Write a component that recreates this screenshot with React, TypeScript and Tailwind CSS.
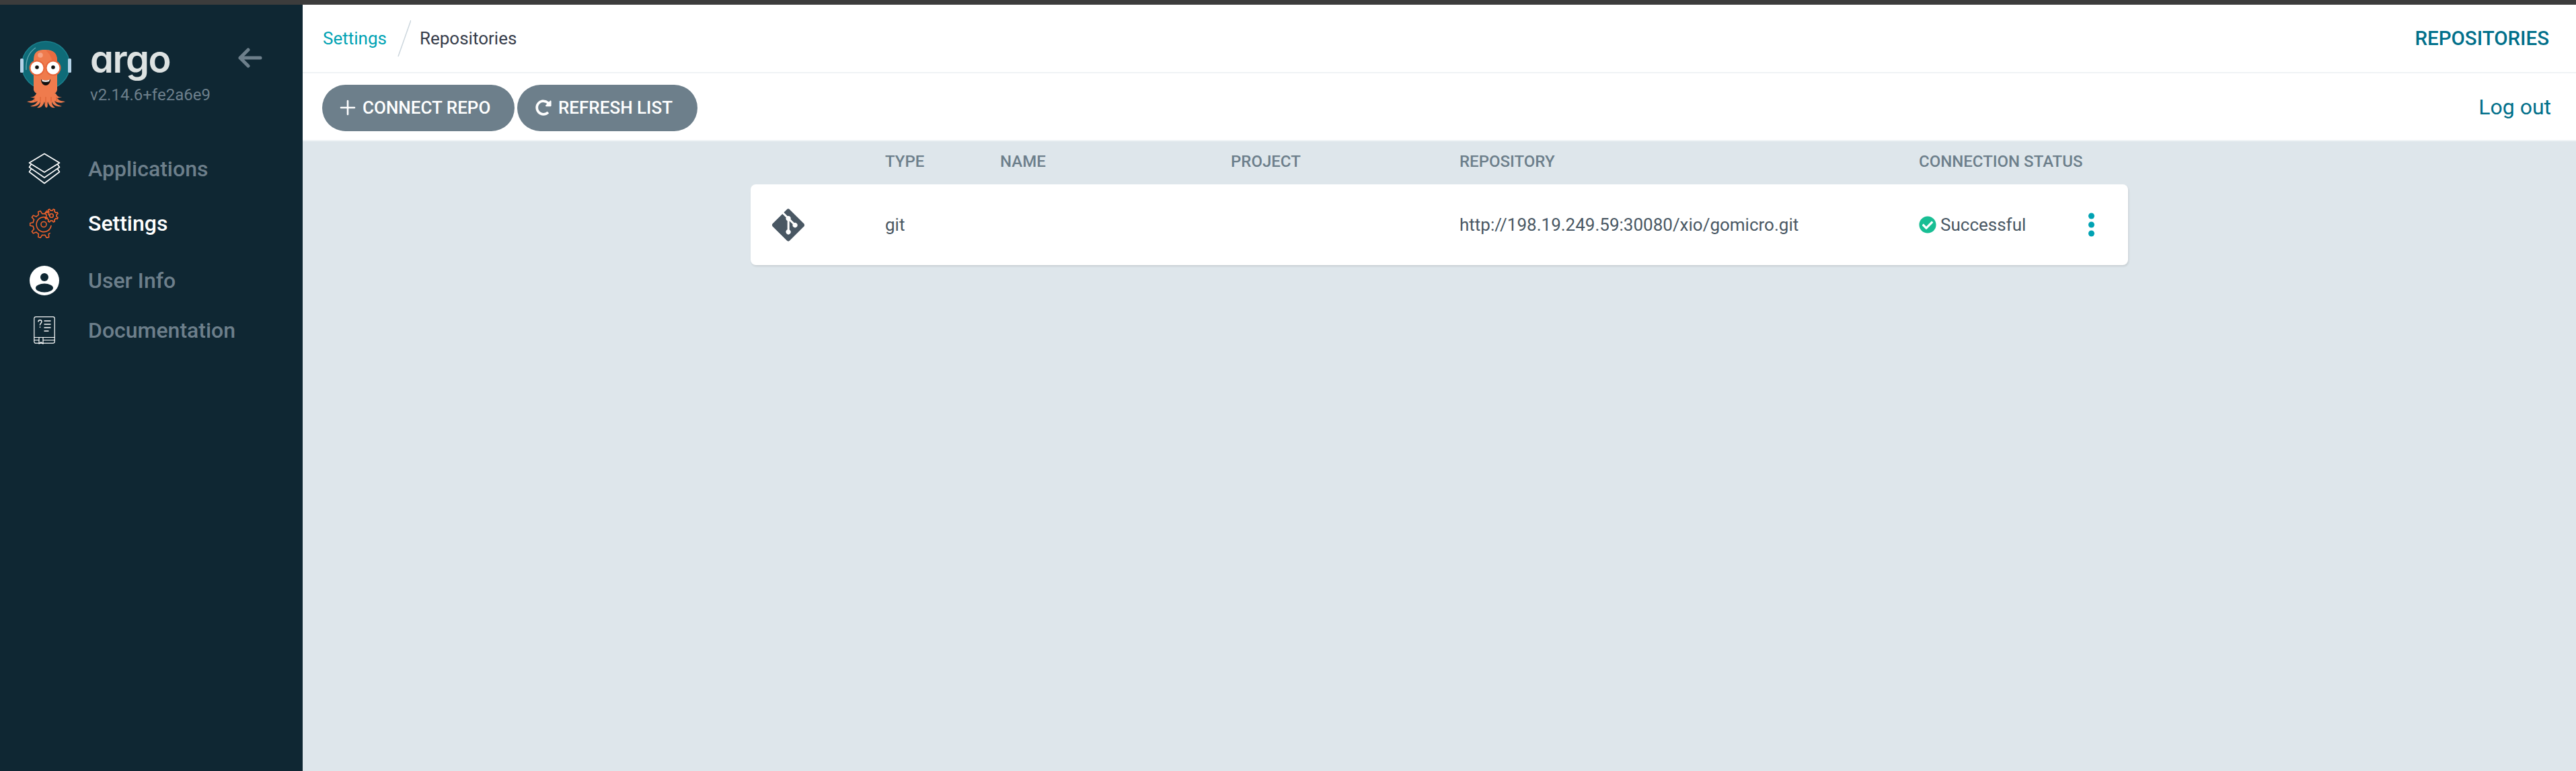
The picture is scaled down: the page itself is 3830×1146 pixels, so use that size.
import React from "react";
import { FaGitAlt, FaCheckCircle, FaRedoAlt } from "react-icons/fa";

function gearPath(cx: number, cy: number, ro: number, ri: number, teeth: number, start: number, end: number) {
  const pts: string[] = [];
  const step = (end - start) / teeth;
  for (let i = 0; i < teeth; i++) {
    const a = start + i * step;
    const p = (r: number, t: number) => {
      const x = cx + r * Math.cos((t * Math.PI) / 180);
      const y = cy + r * Math.sin((t * Math.PI) / 180);
      return `${x.toFixed(2)} ${y.toFixed(2)}`;
    };
    pts.push(`${i === 0 ? "M" : "L"}${p(ri, a)}`);
    pts.push(`L${p(ri, a + step * 0.22)}`);
    pts.push(`L${p(ro, a + step * 0.36)}`);
    pts.push(`L${p(ro, a + step * 0.64)}`);
    pts.push(`L${p(ri, a + step * 0.78)}`);
    pts.push(`L${p(ri, a + step)}`);
  }
  return pts.join(" ");
}

function ArgoLogo() {
  return (
    <svg width="80" height="102" viewBox="0 0 80 102" className="shrink-0">
      <circle cx="38" cy="37" r="35.5" fill="#0f6b78" />
      <circle cx="38" cy="37" r="35.5" fill="none" stroke="#1b7f8c" strokeWidth="1.5" />
      <path d="M9 44 C8 28 14 17 23 11" fill="none" stroke="#5fa6ae" strokeWidth="1.4" />
      <rect x="0" y="27" width="5" height="21" rx="1.5" fill="#b5d3e8" />
      <rect x="71" y="27" width="5" height="21" rx="1.5" fill="#b5d3e8" />
      <path d="M20 73 L20 30 C20 16 27 14 37 14 C47 14 55 17 55 30 L55 73 C55 76 52 80 48 80 L28 80 C24 80 20 76 20 73Z" fill="#ef7b4d" />
      <circle cx="30" cy="22" r="3.8" fill="#f6a283" />
      <path d="M38 15 C48 15 55 18 55 30 L55 45 L50 40 C47 30 47 22 38 15Z" fill="#e8653a" opacity="0.7" />
      <path d="M24 79 C21 85 18 84 15 84 L22 86 C18 91 14 90 10 91 C16 94 22 93 26 90 C24 95 20 96 15 98 C22 99 28 97 30 91 C30 96 28 98 25 100 C31 101 34 97 36 91 C37 95 36 99 39 100 C42 99 40 95 41 91 C43 97 46 101 52 100 C49 98 47 96 47 91 C49 97 55 99 62 98 C57 96 53 95 51 90 C55 93 61 94 67 91 C63 90 59 91 55 86 L62 84 C59 84 56 85 53 79Z" fill="#ef7b4d" />
      <path d="M21 84 C21 92 22 92 24 90 M30 84 L30 91 M38 84 L38 94 M46 84 L46 91 M54 84 C55 92 54 92 52 90" fill="none" stroke="#d4572b" strokeWidth="0.9" />
      <circle cx="25" cy="41" r="10.5" fill="#fff" stroke="#e8653a" strokeWidth="2" />
      <circle cx="49" cy="41" r="10.5" fill="#fff" stroke="#e8653a" strokeWidth="2" />
      <circle cx="25" cy="40" r="2.8" fill="#111" />
      <circle cx="49" cy="40" r="2.8" fill="#111" />
      <path d="M31 58 C35 60 41 60 45 58 C45 64 41 67 38 67 C35 67 31 64 31 58Z" fill="#111" />
      <path d="M32 58 C35 60 41 60 44 58 L43 61 C40 62 36 62 33 61Z" fill="#fff" />
    </svg>
  );
}

function StackIcon() {
  return (
    <svg width="48" height="48" viewBox="0 0 48 48" fill="none" stroke="#fff" strokeWidth="1.6" strokeLinejoin="round" strokeLinecap="round">
      <path d="M24 1.5 L46.5 15 L24 29 L1.5 15Z" />
      <path d="M4.5 17 L1.5 21.5 L24 37 L46.5 21.5 L43.5 17" />
      <path d="M4.5 24 L1.5 28.5 L24 45.5 L46.5 28.5 L43.5 24" />
    </svg>
  );
}

function GearIcon() {
  return (
    <svg width="44" height="44" viewBox="0 0 44 44" fill="none" stroke="#f0622c" strokeWidth="1.6" strokeLinejoin="round" strokeLinecap="round">
      <path d={gearPath(21, 23.5, 20.5, 16, 7, 55, 305)} />
      <circle cx="21" cy="23.5" r="4" />
      <path d="M26.5 14 A11 11 0 1 0 32 25.5" />
      <path d={gearPath(32.5, 10.5, 10, 7.6, 8, 0, 360) + " Z"} />
      <circle cx="32.5" cy="10.5" r="2.8" />
    </svg>
  );
}

function UserIcon() {
  return (
    <svg width="44" height="44" viewBox="0 0 44 44">
      <circle cx="22" cy="22" r="22" fill="#fff" />
      <circle cx="22" cy="17" r="6" fill="#0f2733" />
      <ellipse cx="22" cy="33" rx="13" ry="6.5" fill="#0f2733" />
    </svg>
  );
}

function DocIcon() {
  return (
    <svg width="32" height="42" viewBox="0 0 32 42" fill="none" stroke="#fff" strokeWidth="1.2" strokeLinecap="round" strokeLinejoin="round">
      <rect x="0.8" y="0.8" width="30.4" height="39.4" rx="2.5" />
      <path d="M1 31.5 H31 M1 35.5 H31" />
      <path d="M8 32 V41 L11 38.5 L14 41 V32" fill="#0f2733" />
      <path d="M7 8 C7 5 12 5 12 8 C12 10.5 9.5 10.5 9.5 13 M9.5 16 V16.5" strokeWidth="1.4" />
      <path d="M16 7 H25 M16 12 H25 M16 17 H25 M16 22 H22" strokeWidth="1.4" />
    </svg>
  );
}

function NavItem({ icon, label, active, h }: { icon: React.ReactNode; label: string; active?: boolean; h: string }) {
  return (
    <div className={`flex items-center ${h}`}>
      <div className="w-[131px] pl-[42px] shrink-0">
        <div className="flex justify-center w-[48px]">{icon}</div>
      </div>
      <span className={`text-[32px] leading-none font-medium ${active ? "text-white" : "text-[#6d7f8b]"}`}>{label}</span>
    </div>
  );
}

const cols = "grid grid-cols-[200px_171px_343px_340px_683px_1fr] items-center";

export default function App() {
  return (
    <div className="w-[3830px] h-[1146px] flex flex-col overflow-hidden font-[Roboto,sans-serif] bg-[#dee6eb]">
      <div className="h-[7px] bg-[#3c3c3c] shrink-0" />
      <div className="flex flex-1 min-h-0">
        <aside className="w-[450px] shrink-0 bg-[#0f2733] flex flex-col">
          <div className="flex h-[201px] pl-[30px] pt-[53px] relative">
            <ArgoLogo />
            <div className="ml-[24px] flex flex-col">
              <span className="font-[Inter,sans-serif] [font-feature-settings:'cv11'] font-semibold text-[56px] leading-[62px] text-[#dde2e2] tracking-[-1.5px] -mt-[3px]">argo</span>
              <span className="text-[24px] leading-[26px] text-[#6d7f8b] mt-[9px]">v2.14.6+fe2a6e9</span>
            </div>
            <svg width="36" height="30" viewBox="0 0 36 30" className="absolute left-[354px] top-[64px]" fill="none" stroke="#6d7f8b" strokeWidth="5" strokeLinecap="round" strokeLinejoin="round">
              <path d="M33 15 H3 M15 3 L3 15 L15 27" />
            </svg>
          </div>
          <NavItem h="h-[85px]" icon={<StackIcon />} label="Applications" />
          <NavItem h="h-[78px]" icon={<GearIcon />} label="Settings" active />
          <NavItem h="h-[91px]" icon={<UserIcon />} label="User Info" />
          <NavItem h="h-[58px]" icon={<DocIcon />} label="Documentation" />
        </aside>
        <main className="flex-1 min-w-0 flex flex-col">
          <div className="h-[102px] shrink-0 bg-white border-b-2 border-[#eff3f5] flex items-center pl-[30px] pr-[40px]">
            <span className="text-[26px] text-[#00a2b3]">Settings</span>
            <svg width="20" height="54" viewBox="0 0 20 54" className="ml-[16px] mr-[13px]">
              <path d="M20 0 L1 54" stroke="#ccd6dd" strokeWidth="1.5" />
            </svg>
            <span className="text-[26px] text-[#363c4a]">Repositories</span>
            <span className="ml-auto text-[29.5px] font-medium text-[#006f8a]">REPOSITORIES</span>
          </div>
          <div className="h-[101px] shrink-0 bg-white border-b-2 border-[#eff3f5] flex items-center pl-[29px] pr-[37px] pt-[3px]">
            <button className="h-[69px] w-[286px] rounded-[35px] bg-[#6d7f8b] text-white flex items-center pl-[26px] text-[26px] font-medium">
              <svg width="24" height="24" viewBox="0 0 24 24" className="mr-[10px]" stroke="#fff" strokeWidth="2.6" strokeLinecap="round"><path d="M12 2 V22 M2 12 H22" /></svg>
              CONNECT REPO
            </button>
            <button className="ml-[4px] h-[69px] w-[268px] rounded-[35px] bg-[#6d7f8b] text-white flex items-center pl-[27px] text-[26px] font-medium">
              <FaRedoAlt className="w-[24px] h-[24px] mr-[10px]" />
              REFRESH LIST
            </button>
            <span className="ml-auto text-[32px] text-[#006f8a] -mt-[3px]">Log out</span>
          </div>
          <div className="flex-1 bg-[#dee6eb]">
            <div className="mx-auto w-[2048px]">
              <div className={`${cols} h-[64px] pb-[4px] text-[24px] font-medium text-[#6d7f8b]`}>
                <span />
                <span>TYPE</span>
                <span>NAME</span>
                <span>PROJECT</span>
                <span>REPOSITORY</span>
                <span>CONNECTION STATUS</span>
              </div>
              <div className={`${cols} h-[120px] bg-white rounded-[8px] shadow-[1px_2px_3px_rgba(0,0,0,0.1)] text-[26px] text-[#495763]`}>
                <div className="pl-[32px]"><FaGitAlt className="w-[48px] h-[55px] text-[#495763]" /></div>
                <span>git</span>
                <span />
                <span />
                <span>http://198.19.249.59:30080/xio/gomicro.git</span>
                <div className="flex items-center relative">
                  <FaCheckCircle className="w-[26px] h-[26px] text-[#18be94]" />
                  <span className="ml-[6px]">Successful</span>
                  <div className="absolute left-[252px] top-1/2 -translate-y-1/2 flex flex-col gap-[4px]">
                    <span className="w-[9px] h-[9px] rounded-full bg-[#00a2b3]" />
                    <span className="w-[9px] h-[9px] rounded-full bg-[#00a2b3]" />
                    <span className="w-[9px] h-[9px] rounded-full bg-[#00a2b3]" />
                  </div>
                </div>
              </div>
            </div>
          </div>
        </main>
      </div>
    </div>
  );
}
